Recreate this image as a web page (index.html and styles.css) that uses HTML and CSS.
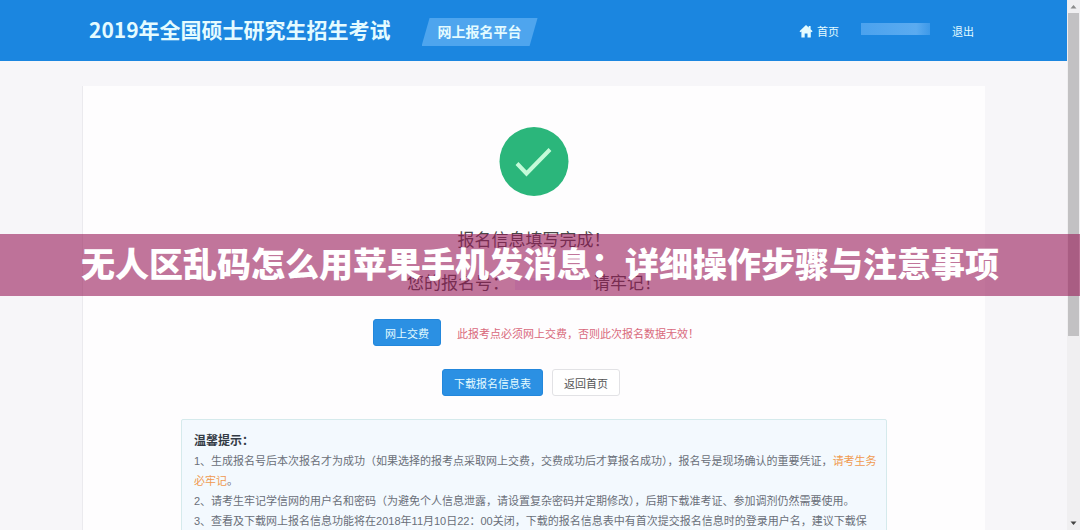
FILE: index.html
```html
<!DOCTYPE html>
<html lang="zh-CN">
<head>
<meta charset="utf-8">
<title>2019年全国硕士研究生招生考试</title>
<link rel="stylesheet" href="styles.css">
</head>
<body>
<div class="window">
  <div class="page">
    <header class="header">
      <h1 class="title">2019年全国硕士研究生招生考试</h1>
      <span class="tag"><span class="tag-text">网上报名平台</span></span>
      <nav class="nav">
        <a class="nav-link" href="#">
          <svg class="home" viewBox="0 0 14 14" aria-hidden="true"><path d="M7 1 0.5 7.2 1.5 8.2 2.4 7.5V13.5H5.7V9.4H8.5V13.5H11.8V7.5L12.6 8.2 13.6 7.2 11.6 5.2V2H9.7V3.5Z" fill="currentColor"/></svg>首页</a>
        <span class="user"></span>
        <a class="nav-link" href="#">退出</a>
      </nav>
    </header>
    <main class="card">
      <svg class="done" viewBox="0 0 70 70" aria-hidden="true"><circle cx="35" cy="35.500" r="34.500" fill="#2bb67b"/><path d="M18 37.500 27.500 47.500 51 23.500" fill="none" stroke="#c4fbd9" stroke-width="4"/></svg>
      <p class="message">报名信息填写完成！</p>
      <p class="message number">您的报名号：<span class="masked"></span>请牢记！</p>
      <div class="pay">
        <button class="btn primary" type="button">网上交费</button>
        <span class="warning">此报考点必须网上交费，否则此次报名数据无效！</span>
      </div>
      <div class="actions">
        <button class="btn primary" type="button">下载报名信息表</button>
        <button class="btn" type="button">返回首页</button>
      </div>
      <section class="tips">
        <h2 class="tips-title">温馨提示：</h2>
        <p>1、生成报名号后本次报名才为成功（如果选择的报考点采取网上交费，交费成功后才算报名成功），报名号是现场确认的重要凭证，<em class="hot">请考生务必牢记</em>。</p>
        <p>2、请考生牢记学信网的用户名和密码（为避免个人信息泄露，请设置复杂密码并定期修改），后期下载准考证、参加调剂仍然需要使用。</p>
        <p>3、查看及下载网上报名信息功能将在2018年11月10日22：00关闭，下载的报名信息表中有首次提交报名信息时的登录用户名，建议下载保</p>
      </section>
    </main>
  </div>
  <div class="scrollbar" aria-hidden="true">
    <svg class="arrow" viewBox="0 0 13 13"><path d="M3.500 8.500 6.500 5 9.500 8.500Z" fill="#8b8b8b"/></svg>
    <div class="track"><div class="thumb"></div></div>
    <svg class="arrow" viewBox="0 0 13 13"><path d="M3.500 4.500 6.500 8 9.500 4.500Z" fill="#444"/></svg>
  </div>
</div>
<div class="banner">无人区乱码怎么用苹果手机发消息：详细操作步骤与注意事项</div>
</body>
</html>
```
FILE: styles.css
```css
* { box-sizing: border-box; }
body {
  margin: 0;
  font-family: "Liberation Sans", "Noto Sans CJK SC", sans-serif;
  font-size: 11px;
  color: #6a6f79;
  background: #f7f6f9;
}
h1, h2, p { margin: 0; }
.window { display: flex; height: 100vh; overflow: hidden; }
.page { flex: 1; min-width: 0; }
.header {
  display: flex;
  align-items: center;
  height: 61px;
  padding: 0 93px 0 89px;
  background: #1b86e0;
  color: #e4fbff;
}
.title { margin-bottom: 3px; font-family: "Noto Sans CJK SC", sans-serif; font-size: 21px; line-height: 32px; white-space: nowrap; }
.tag {
  margin: 3px 0 0 31px;
  padding: 0 16px;
  background: #4ea5ee;
  clip-path: polygon(8px 0, 100% 0, calc(100% - 8px) 100%, 0 100%);
}
.tag-text { display: block; font-size: 14px; line-height: 28px; font-weight: bold; white-space: nowrap; }
.nav { display: flex; align-items: center; gap: 22px; margin-left: auto; }
.nav-link { display: flex; align-items: center; gap: 4px; color: inherit; text-decoration: none; white-space: nowrap; }
.home { width: 14px; height: 14px; }
.user { width: 69px; height: 12px; margin-bottom: 4px; background: linear-gradient(90deg, #4ba2ee, #5babf0 80%, #3d99e9); }
.card {
  display: flex;
  flex-direction: column;
  align-items: center;
  max-width: 903px;
  margin: 25px auto 0;
  padding: 40px 98px 20px;
  background: #fefdfe;
  border-left: 1px solid #ebeaee;
}
.done { width: 70px; height: 70px; }
.message {
  margin-top: 32px;
  font-size: 17px;
  line-height: 26px;
  color: #484848;
  white-space: nowrap;
}
.number { display: flex; align-items: center; margin-top: 17px; }
.masked { width: 76px; height: 12px; margin: 0 2px 0 6px; background: #efe4ff; }
.btn {
  height: 27px;
  padding: 0 11px;
  border: 1px solid #e2e2e5;
  border-radius: 3px;
  background: #fff;
  color: #555;
  font: inherit;
  white-space: nowrap;
}
.primary { border-color: #2387dc; background: #2b90e3; color: #e4fbff; }
.pay { display: flex; align-items: center; gap: 16px; margin-top: 22px; padding-left: 4px; }
.warning { color: #d9697c; white-space: nowrap; }
.actions { display: flex; gap: 9px; margin: 23px 0; padding-right: 6px; }
.tips {
  align-self: stretch;
  padding: 11px 4px 12px 12px;
  border: 1px solid #d5eaec;
  border-radius: 2px;
  background: #f3f9fe;
  line-height: 20px;
}
.tips-title { font-size: 12px; line-height: 20px; color: #333b45; }
.hot { font-style: normal; color: #f09a50; }
.scrollbar { display: flex; flex-direction: column; width: 13px; background: #f0eff1; }
.arrow { width: 13px; height: 13px; }
.track { flex: 1; }
.thumb { width: 11px; height: 64%; margin-left: 1px; background: #c2c1c3; }
.banner {
  position: absolute;
  top: 234px;
  left: 0;
  right: 0;
  background: rgba(152, 27, 88, 0.6);
  color: #fff;
  font-size: 34px;
  font-weight: 900;
  line-height: 62px;
  text-align: center;
  white-space: nowrap;
}
```
